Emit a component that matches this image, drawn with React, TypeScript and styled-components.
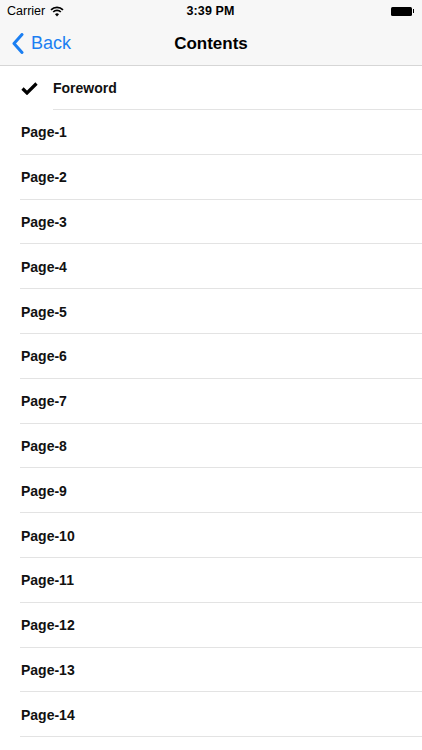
import React from "react";
import styled, { createGlobalStyle } from "styled-components";

const GlobalStyle = createGlobalStyle`
  html, body {
    margin: 0;
    padding: 0;
    background: #ffffff;
    overflow: hidden;
  }
  body {
    font-family: "Liberation Sans", Arial, sans-serif;
    -webkit-font-smoothing: antialiased;
  }
`;

const Screen = styled.div`
  width: 422px;
  height: 750px;
  overflow: hidden;
  display: flex;
  flex-direction: column;
  background: #fff;
`;

const Header = styled.header`
  background: #f7f7f7;
  border-bottom: 1px solid #d6d6d6;
  flex-shrink: 0;
`;

const StatusBar = styled.div`
  height: 22px;
  display: grid;
  grid-template-columns: 1fr auto 1fr;
  align-items: center;
  padding: 0 8px 0 7px;
  font-size: 12.5px;
  color: #000;
`;

const Carrier = styled.div`
  display: flex;
  align-items: center;
  gap: 5px;
`;

const Clock = styled.div`
  font-weight: 700;
  font-size: 12.5px;
  letter-spacing: 0.1px;
`;

const Battery = styled.div`
  justify-self: end;
  display: flex;
  align-items: center;
`;

const BatteryBody = styled.div`
  width: 21px;
  height: 9px;
  background: #000;
  border-radius: 1.5px;
`;

const BatteryTip = styled.div`
  width: 1.5px;
  height: 4px;
  background: #000;
  margin-left: 1px;
`;

const NavBar = styled.nav`
  height: 43px;
  display: grid;
  grid-template-columns: 1fr auto 1fr;
  align-items: center;
`;

const BackButton = styled.div`
  display: flex;
  align-items: center;
  gap: 7px;
  padding-left: 12px;
  color: #1b7ff2;
  font-size: 18px;
`;

const Title = styled.div`
  font-size: 17px;
  font-weight: 700;
  color: #000;
`;

const List = styled.ul`
  list-style: none;
  margin: 0;
  padding: 0;
`;

const Row = styled.li<{ $indent: number; $height: number }>`
  height: ${(p) => p.$height}px;
  display: flex;
  align-items: center;
  position: relative;
  padding-left: 21px;
  &::after {
    content: "";
    position: absolute;
    left: ${(p) => p.$indent}px;
    right: 0;
    bottom: 0;
    height: 1px;
    background: #e3e3e3;
  }
`;

const Check = styled.div`
  width: 32px;
  display: flex;
  align-items: center;
`;

const Label = styled.span`
  font-size: 14px;
  font-weight: 700;
  color: #111;
`;

const WifiIcon = () => (
  <svg width="14" height="11" viewBox="0 0 14 11">
    <path d="M1 3.8 A8.5 8.5 0 0 1 13 3.8" fill="none" stroke="#000" strokeWidth="1.7" />
    <path d="M3.2 6 A5.3 5.3 0 0 1 10.8 6" fill="none" stroke="#000" strokeWidth="1.7" />
    <path d="M7 10.5 L5 8.2 A2.8 2.8 0 0 1 9 8.2 Z" fill="#000" />
  </svg>
);

const Chevron = () => (
  <svg width="12" height="21" viewBox="0 0 12 21">
    <path d="M10 1.5 L2 10.5 L10 19.5" fill="none" stroke="#1b7ff2" strokeWidth="3" strokeLinecap="round" strokeLinejoin="round" />
  </svg>
);

const CheckMark = () => (
  <svg width="17" height="13" viewBox="0 0 17 13">
    <path d="M1.5 6.5 L6 11 L15.5 1.5" fill="none" stroke="#000" strokeWidth="3.2" strokeLinejoin="miter" />
  </svg>
);

const pages = Array.from({ length: 14 }, (_, i) => `Page-${i + 1}`);

export default function App() {
  return (
    <Screen>
      <GlobalStyle />
      <Header>
        <StatusBar>
          <Carrier>
            Carrier <WifiIcon />
          </Carrier>
          <Clock>3:39 PM</Clock>
          <Battery>
            <BatteryBody />
            <BatteryTip />
          </Battery>
        </StatusBar>
        <NavBar>
          <BackButton>
            <Chevron />
            Back
          </BackButton>
          <Title>Contents</Title>
          <div />
        </NavBar>
      </Header>
      <List>
        <Row $indent={53} $height={44}>
          <Check>
            <CheckMark />
          </Check>
          <Label>Foreword</Label>
        </Row>
        {pages.map((p) => (
          <Row key={p} $indent={20} $height={44.8}>
            <Label>{p}</Label>
          </Row>
        ))}
      </List>
    </Screen>
  );
}
